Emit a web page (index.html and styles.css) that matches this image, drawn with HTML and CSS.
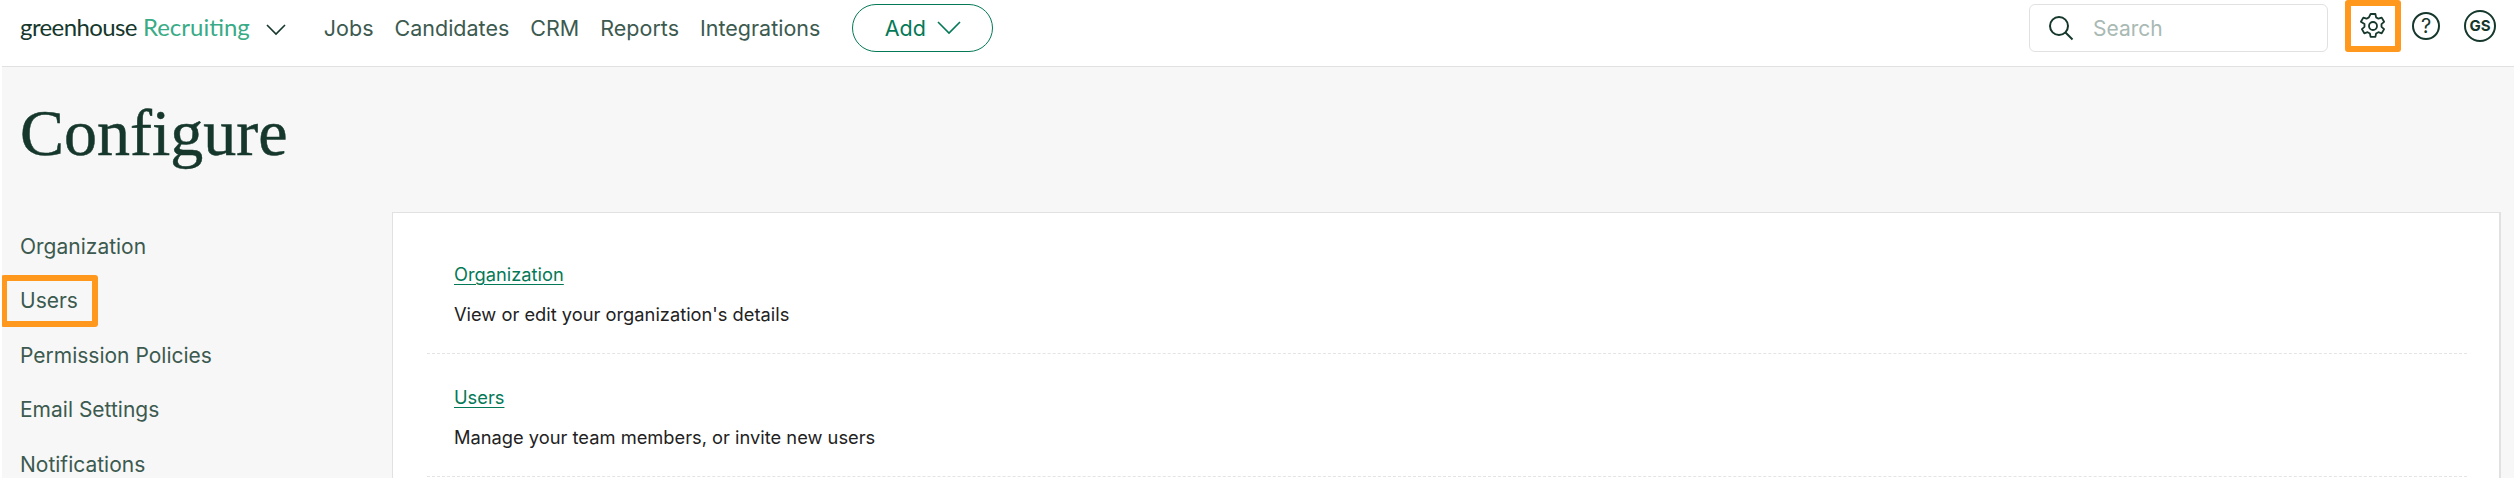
FILE: index.html
```html
<!DOCTYPE html>
<html>

<head>
    <meta charset="UTF-8">
    <title>Configure</title>
    <link rel="stylesheet" href="styles.css">
</head>

<body>
    <header class="topbar">
        <div class="brand">
            <span class="brand-name">greenhouse</span>
            <span class="brand-product">Recruiting</span>
            <svg class="chevron brand-chevron" viewBox="0 0 20 12"><path d="M1 1l9 9 9-9" /></svg>
        </div>
        <nav class="main-nav">
            <a>Jobs</a>
            <a>Candidates</a>
            <a>CRM</a>
            <a>Reports</a>
            <a>Integrations</a>
        </nav>
        <button class="add-btn">Add
            <svg class="chevron add-chevron" viewBox="0 0 24 14"><path d="M1 1l11 11L23 1" /></svg>
        </button>

        <div class="tools">
            <div class="search">
                <svg class="search-icon" viewBox="0 0 26 26"><circle cx="11" cy="11" r="9" /><path d="M17.5 17.5l7 7" /></svg>
                <span class="search-text">Search</span>
            </div>
            <div class="highlight settings">
                <svg class="tool-icon" viewBox="0 0 28 28">
                    <path d="M11.6 2h4.8l.7 3.4 2.3 1.3 3.3-1.1 2.4 4.2-2.6 2.3v2.7l2.6 2.3-2.4 4.2-3.3-1.1-2.3 1.3-.7 3.4h-4.8l-.7-3.4-2.3-1.3-3.3 1.1-2.4-4.2 2.6-2.3v-2.7L1.9 9.8l2.4-4.2 3.3 1.1 2.3-1.3z" stroke-linejoin="round" />
                    <circle cx="14" cy="14" r="4" />
                </svg>
            </div>
            <div class="help">?</div>
            <div class="avatar">GS</div>
        </div>
    </header>

    <main class="page">
        <h1 class="title">Configure</h1>
        <div class="columns">
            <ul class="side-nav">
                <li>Organization</li>
                <li><span class="highlight side-current">Users</span></li>
                <li>Permission Policies</li>
                <li>Email Settings</li>
                <li>Notifications</li>
            </ul>
            <section class="card">
                <div class="card-row">
                    <a class="card-link">Organization</a>
                    <p class="card-text">View or edit your organization's details</p>
                </div>
                <div class="card-row">
                    <a class="card-link">Users</a>
                    <p class="card-text">Manage your team members, or invite new users</p>
                </div>
            </section>
        </div>
    </main>
</body>

</html>
```

FILE: styles.css
```css
:root {
    --dark-green: #15372c;
    --nav-text: #3c5a4f;
    --green: #047957;
    --border: #e1e1e1;
    --orange: #ff981d;
}

body {
    margin: 0;
    height: 478px;
    overflow: hidden;
    background: white;
    font-family: Inter, "Liberation Sans", sans-serif;
    color: var(--dark-green);
}

.topbar {
    display: flex;
    align-items: center;
    height: 67px;
    padding: 0 18px 10px 18px;
    box-sizing: border-box;
    margin-left: 2px;
    border-bottom: 1px solid var(--border);
}

.brand {
    display: flex;
    align-items: baseline;
    margin-top: -3px;
    font-family: Lato, sans-serif;
    font-size: 24px;
}

.brand-name {
    color: var(--dark-green);
    letter-spacing: -0.6px;
}

.brand-product {
    margin-left: 6px;
    color: #39ab86;
}

.chevron {
    fill: none;
    stroke: currentColor;
    stroke-width: 1.6;
}

.brand-chevron {
    width: 20px;
    height: 12px;
    margin-left: 16px;
}

.main-nav {
    display: flex;
    gap: 21px;
    margin-left: 38px;
    font-size: 21.5px;
    color: var(--nav-text);
}

.add-btn {
    display: flex;
    align-items: center;
    justify-content: center;
    gap: 11px;
    width: 141px;
    height: 48px;
    margin-left: 32px;
    padding: 0;
    background: white;
    border: 1px solid var(--green);
    border-radius: 24px;
    color: var(--green);
    font-family: inherit;
    font-size: 21.5px;
    font-weight: 400;
}

.add-chevron {
    width: 24px;
    height: 14px;
}

.tools {
    display: flex;
    align-items: center;
    align-self: flex-start;
    margin-left: auto;
}

.search {
    display: flex;
    align-items: center;
    width: 299px;
    height: 48px;
    box-sizing: border-box;
    margin-top: 4px;
    padding-left: 18px;
    border: 1px solid var(--border);
    border-radius: 6px;
}

.search-icon {
    width: 26px;
    height: 26px;
    fill: none;
    stroke: var(--dark-green);
    stroke-width: 2;
}

.search-text {
    margin-left: 19px;
    font-size: 21px;
    color: #a9b9b3;
}

.highlight {
    box-sizing: border-box;
    border: 6px solid var(--orange);
    border-radius: 3px;
}

.settings {
    display: flex;
    align-items: center;
    justify-content: center;
    width: 56px;
    height: 52px;
    margin-left: 17px;
}

.tool-icon {
    width: 28px;
    height: 28px;
    fill: none;
    stroke: var(--dark-green);
    stroke-width: 1.8;
}

.help {
    width: 28px;
    height: 28px;
    box-sizing: border-box;
    margin-left: 11px;
    border: 2px solid var(--dark-green);
    border-radius: 50%;
    text-align: center;
    line-height: 24px;
    font-size: 20px;
}

.avatar {
    width: 32px;
    height: 32px;
    box-sizing: border-box;
    margin-left: 24px;
    border: 2px solid var(--dark-green);
    border-radius: 50%;
    text-align: center;
    line-height: 28px;
    font-size: 15px;
    font-weight: 700;
}

.page {
    height: 411px;
    margin-left: 2px;
    padding: 0 13px 0 18px;
    background: #f7f7f7;
    overflow: hidden;
}

.title {
    height: 145px;
    box-sizing: border-box;
    margin: 0;
    padding-top: 28px;
    font-family: "Liberation Serif", serif;
    font-size: 66px;
    line-height: 76px;
    font-weight: 400;
    -webkit-text-stroke: 0.5px var(--dark-green);
}

.columns {
    display: flex;
}

.side-nav {
    width: 372px;
    flex-shrink: 0;
    margin: 0;
    padding: 7px 0 0;
    list-style: none;
    font-size: 21px;
    color: var(--nav-text);
}

.side-nav li {
    display: flex;
    align-items: center;
    height: 54.5px;
}

.side-current {
    display: flex;
    align-items: center;
    width: 97px;
    height: 52px;
    margin-left: -19px;
    padding-left: 13px;
}

.card {
    flex: 1;
    height: 400px;
    box-sizing: border-box;
    padding: 18px 32px 18px 34px;
    background: white;
    border: 1px solid var(--border);
    border-width: 1px 2px 0 1px;
}

.card-row {
    height: 123px;
    box-sizing: border-box;
    padding: 33px 27px 0;
    border-bottom: 1px dashed #e4e4e4;
}

.card-link {
    display: block;
    width: max-content;
    color: var(--green);
    font-size: 18.3px;
    line-height: 20px;
    text-decoration: underline;
    text-underline-offset: 3px;
}

.card-text {
    margin: 20px 0 0;
    color: #222;
    font-size: 18.3px;
    line-height: 20px;
}
```
